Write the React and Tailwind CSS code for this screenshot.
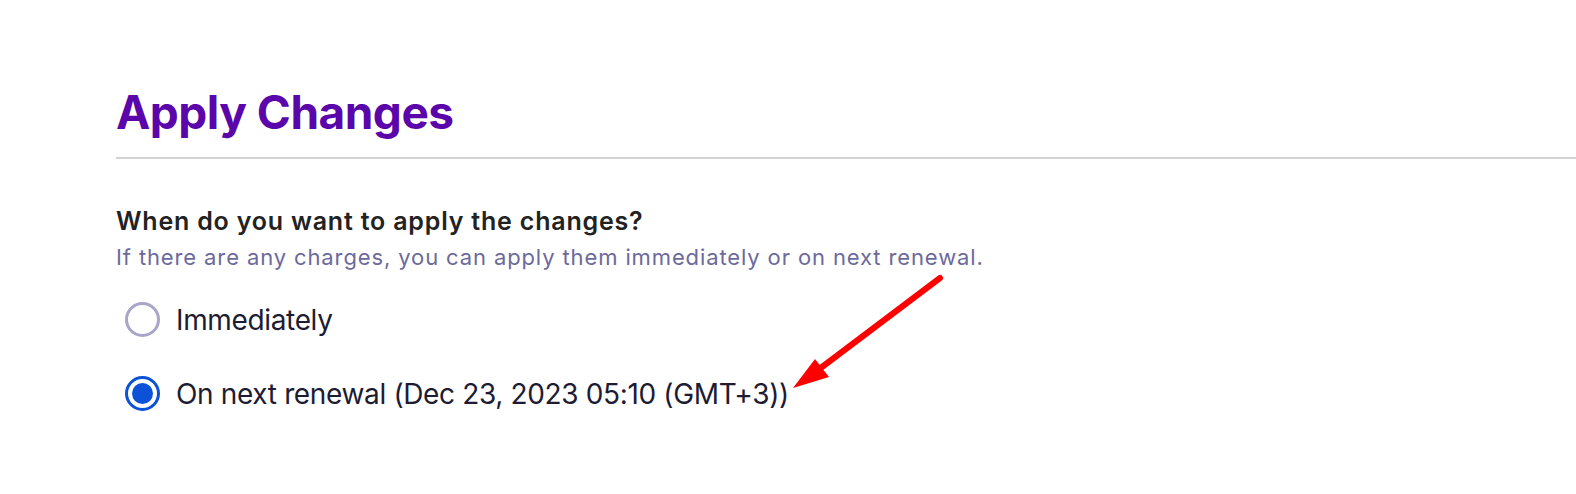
import React from "react";

function Radio({ checked }) {
  if (checked) {
    return (
      <span className="flex h-[35px] w-[35px] shrink-0 items-center justify-center rounded-full border-[3px] border-[#0b52d8] bg-white">
        <span className="h-[21px] w-[21px] rounded-full bg-[#0b52d8]" />
      </span>
    );
  }
  return <span className="h-[35px] w-[35px] shrink-0 rounded-full border-[3px] border-[#a9a5c9] bg-white" />;
}

export default function App() {
  const options = [
    { label: "Immediately", checked: false },
    { label: "On next renewal (Dec 23, 2023 05:10 (GMT+3))", checked: true },
  ];

  return (
    <div className="relative h-[494px] w-[1576px] overflow-hidden bg-white font-['Inter',sans-serif]">
      <div className="pl-[116px] pt-[80px]">
        <h1 className="text-[46px] font-bold leading-[64px] tracking-[-0.5px] text-[#5a06ab]">Apply Changes</h1>
        <div className="mt-[13px] h-[2px] bg-[#d2d2d2]" />

        <div className="mt-[47px]">
          <p className="text-[25px] font-semibold leading-[30px] tracking-[0.8px] text-[#222222]">
            When do you want to apply the changes?
          </p>
          <p className="mt-[7px] text-[22px] leading-[28px] tracking-[0.88px] text-[#6c6a9c]">
            If there are any charges, you can apply them immediately or on next renewal.
          </p>
        </div>

        <div className="mt-[30px] flex flex-col gap-[38px] pl-[9px]">
          {options.map((o) => (
            <label key={o.label} className="flex h-[36px] items-center gap-[16px]">
              <Radio checked={o.checked} />
              <span className="pt-[2px] text-[28px] leading-[36px] tracking-[-0.35px] text-[#1d1c33]">{o.label}</span>
            </label>
          ))}
        </div>
      </div>

      <svg className="absolute left-0 top-0" width="1576" height="494" viewBox="0 0 1576 494">
        <line x1="940" y1="278" x2="818" y2="370" stroke="#ff0000" strokeWidth="6" strokeLinecap="round" />
        <polygon points="793,388 815,359 829,377" fill="#ff0000" />
      </svg>
    </div>
  );
}
